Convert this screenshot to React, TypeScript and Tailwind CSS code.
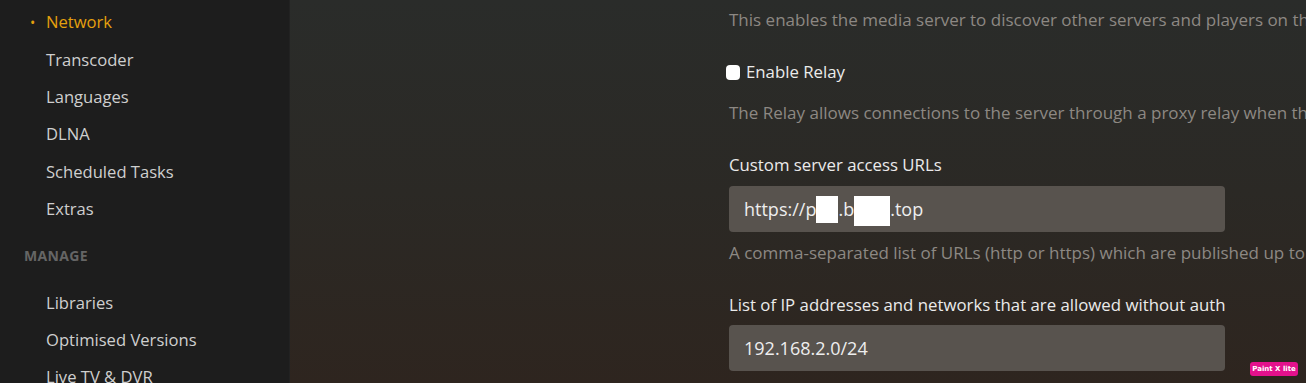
import React from 'react';

const settingsNav = ['Network', 'Transcoder', 'Languages', 'DLNA', 'Scheduled Tasks', 'Extras'];
const manageNav = ['Libraries', 'Optimised Versions', 'Live TV & DVR'];

const NavItem: React.FC<{ label: string; active?: boolean }> = ({ label, active }) => (
  <div className="relative flex h-[37.4px] items-center pl-[46px]">
    {active && <span className="absolute left-[30px] text-[14px] text-[#e5a00d]">•</span>}
    <span className={active ? 'text-[#e5a00d]' : 'text-[#cfcfcf]'}>{label}</span>
  </div>
);

const App: React.FC = () => {
  return (
    <div
      className="relative flex h-[383px] w-[1306px] overflow-hidden text-[16.6px]"
      style={{ fontFamily: '"Open Sans", "Noto Sans", sans-serif' }}
    >
      <aside className="w-[290px] shrink-0 border-r border-[#222] bg-[#1d1d1d] pt-[4px]">
        {settingsNav.map((item) => (
          <NavItem key={item} label={item} active={item === 'Network'} />
        ))}
        <div className="mt-[15px] mb-[17px] flex h-[24px] items-center pl-[24px] text-[14px] font-bold tracking-wide text-[#656565]">
          MANAGE
        </div>
        {manageNav.map((item) => (
          <NavItem key={item} label={item} />
        ))}
      </aside>

      <main className="flex-1 overflow-hidden whitespace-nowrap bg-gradient-to-b from-[#2a2c2a] via-[#2b2925] to-[#2e251f] pl-[439px] pt-[8px] text-[17px]">
        <p className="h-[24px] leading-[24px] text-[#8d8883]">
          This enables the media server to discover other servers and players on the local network.
        </p>

        <label className="mt-[28px] flex h-[24px] items-center gap-[6px] text-[16.8px] text-[#ebebeb]">
          <span className="ml-[-3px] h-[15px] w-[14px] rounded-[4px] bg-white" />
          Enable Relay
        </label>

        <p className="mt-[17px] h-[24px] leading-[24px] text-[#8d8883]">
          The Relay allows connections to the server through a proxy relay when the server is not accessible otherwise.
        </p>

        <div className="mt-[28px] h-[24px] text-[16.8px] leading-[24px] text-[#ebebeb]">Custom server access URLs</div>
        <div className="mt-[9px] flex h-[46px] w-[496px] items-center rounded-[4px] bg-[#58534e] px-[15px] text-[18px] text-[#eeeeee]">
          https://p
          <span className="inline-block h-[27px] w-[22px] bg-white" />
          .b
          <span className="inline-block h-[30px] w-[36px] translate-y-[2px] bg-white" />
          .top
        </div>

        <p className="mt-[9px] h-[24px] leading-[24px] text-[#8d8883]">
          A comma-separated list of URLs (http or https) which are published up to plex.tv for server discovery.
        </p>

        <div className="mt-[28px] h-[24px] text-[16.8px] leading-[24px] text-[#ebebeb]">
          List of IP addresses and networks that are allowed without auth
        </div>
        <div className="mt-[8px] flex h-[46px] w-[496px] items-center rounded-[4px] bg-[#58534e] px-[15px] text-[18px] text-[#eeeeee]">
          192.168.2.0/24
        </div>
      </main>

      <div
        className="absolute right-[8px] bottom-[7px] flex h-[14px] w-[48px] items-center justify-center whitespace-nowrap rounded-[3px] bg-[#e3118c] text-[7px] font-bold text-white"
        style={{ fontFamily: '"DejaVu Sans", sans-serif' }}
      >
        Paint X lite
      </div>
    </div>
  );
};

export default App;
